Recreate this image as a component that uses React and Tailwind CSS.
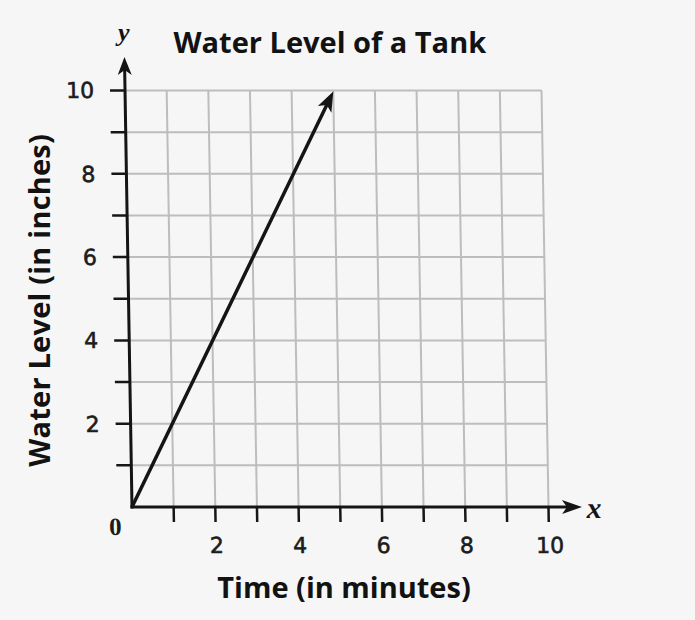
const U = 41.65
const X = (u) => 132 + u * U
const Y = (u) => 507 - u * U
const units = [1, 2, 3, 4, 5, 6, 7, 8, 9, 10]

function arrowHead(x0, y0, x1, y1, len = 20, half = 7.5) {
  const dx = x1 - x0
  const dy = y1 - y0
  const l = Math.hypot(dx, dy)
  const ux = dx / l
  const uy = dy / l
  const bx = x1 - ux * len
  const by = y1 - uy * len
  const nx = -uy
  const ny = ux
  const kx = x1 - ux * (len - 5)
  const ky = y1 - uy * (len - 5)
  return `${x1},${y1} ${bx + nx * half},${by + ny * half} ${kx},${ky} ${bx - nx * half},${by - ny * half}`
}

function Chart() {
  const tipX = X(5)
  const tipY = Y(10) + 1
  return (
    <svg width="635" height="509" viewBox="60 56 635 509" className="block">
      <g transform="translate(-8.5 0) skewX(0.96)">
        {/* grid */}
        <g stroke="#bdbdbd" strokeWidth="2">
          {units.map((u) => (
            <line key={'v' + u} x1={X(u)} y1={Y(10)} x2={X(u)} y2={Y(0)} />
          ))}
          {units.map((u) => (
            <line key={'h' + u} x1={X(0)} y1={Y(u)} x2={X(10)} y2={Y(u)} />
          ))}
        </g>

        {/* ticks */}
        <g stroke="#161616" strokeWidth="2.5">
          {units.map((u) => (
            <line key={'ty' + u} x1={X(0) - 15} y1={Y(u)} x2={X(0)} y2={Y(u)} />
          ))}
          {units.map((u) => (
            <line key={'tx' + u} x1={X(u)} y1={Y(0)} x2={X(u)} y2={Y(0) + 15} />
          ))}
        </g>

        {/* axes */}
        <g stroke="#141414" strokeWidth="3">
          <line x1={X(0)} y1={Y(0) + 1.5} x2={X(0)} y2={70} />
          <line x1={X(0) - 1.5} y1={Y(0)} x2={568} y2={Y(0)} />
        </g>
        <polygon points={arrowHead(X(0), 200, X(0), 57, 18, 7)} fill="#141414" />
        <polygon points={arrowHead(300, Y(0), 582, Y(0), 20, 7)} fill="#141414" />

        {/* data line */}
        <line x1={X(0)} y1={Y(0)} x2={tipX - 6} y2={tipY + 12} stroke="#141414" strokeWidth="3.5" />
        <polygon points={arrowHead(X(0), Y(0), tipX, tipY, 20, 7.5)} fill="#141414" />

        {/* tick labels */}
        <g
          fill="#1c1c1c"
          stroke="#1c1c1c"
          strokeWidth="0.6"
          fontFamily="'DejaVu Sans', sans-serif"
          fontSize="22"
        >
          {[2, 4, 6, 8, 10].map((v) => (
            <text key={'ly' + v} x="101" y={Y(v) + 8} textAnchor="end">
              {v}
            </text>
          ))}
          {[2, 4, 6, 8, 10].map((v) => (
            <text key={'lx' + v} x={X(v) + 1} y="553" textAnchor="middle">
              {v}
            </text>
          ))}
        </g>
        <text
          x="115"
          y="535"
          textAnchor="middle"
          fill="#1c1c1c"
          fontFamily="'Liberation Serif', serif"
          fontWeight="bold"
          fontSize="25"
        >
          0
        </text>

        <text
          x="594"
          y="518"
          textAnchor="middle"
          fill="#141414"
          fontFamily="'Liberation Serif', serif"
          fontStyle="italic"
          fontWeight="bold"
          fontSize="30"
        >
          x
        </text>
      </g>
    </svg>
  )
}

export default function App() {
  return (
    <div className="w-[695px] h-[620px] bg-[#f6f6f6] flex overflow-hidden text-[#121212]">
      {/* y axis title */}
      <div className="w-[60px] h-full flex flex-col justify-center pl-[24px] pb-[20px]">
        <span className="[writing-mode:vertical-rl] rotate-180 whitespace-nowrap font-['Open_Sans',sans-serif] font-bold text-[29px] tracking-[0.2px] leading-none">
          Water Level (in inches)
        </span>
      </div>

      <div className="flex flex-col w-[635px]">
        {/* title row */}
        <div className="flex items-start h-[56px]">
          <span className="ml-[58px] mt-[20px] font-['Liberation_Serif',serif] italic font-bold text-[26px] leading-none">
            y
          </span>
          <h1 className="ml-[44px] mt-[27px] font-['Open_Sans',sans-serif] font-bold text-[29px] leading-none whitespace-nowrap">
            Water Level of a Tank
          </h1>
        </div>

        <Chart />

        <div className="w-[568px] text-center mt-[7px]">
          <span className="font-['Open_Sans',sans-serif] font-bold text-[29px] leading-none whitespace-nowrap">
            Time (in minutes)
          </span>
        </div>
      </div>
    </div>
  )
}
